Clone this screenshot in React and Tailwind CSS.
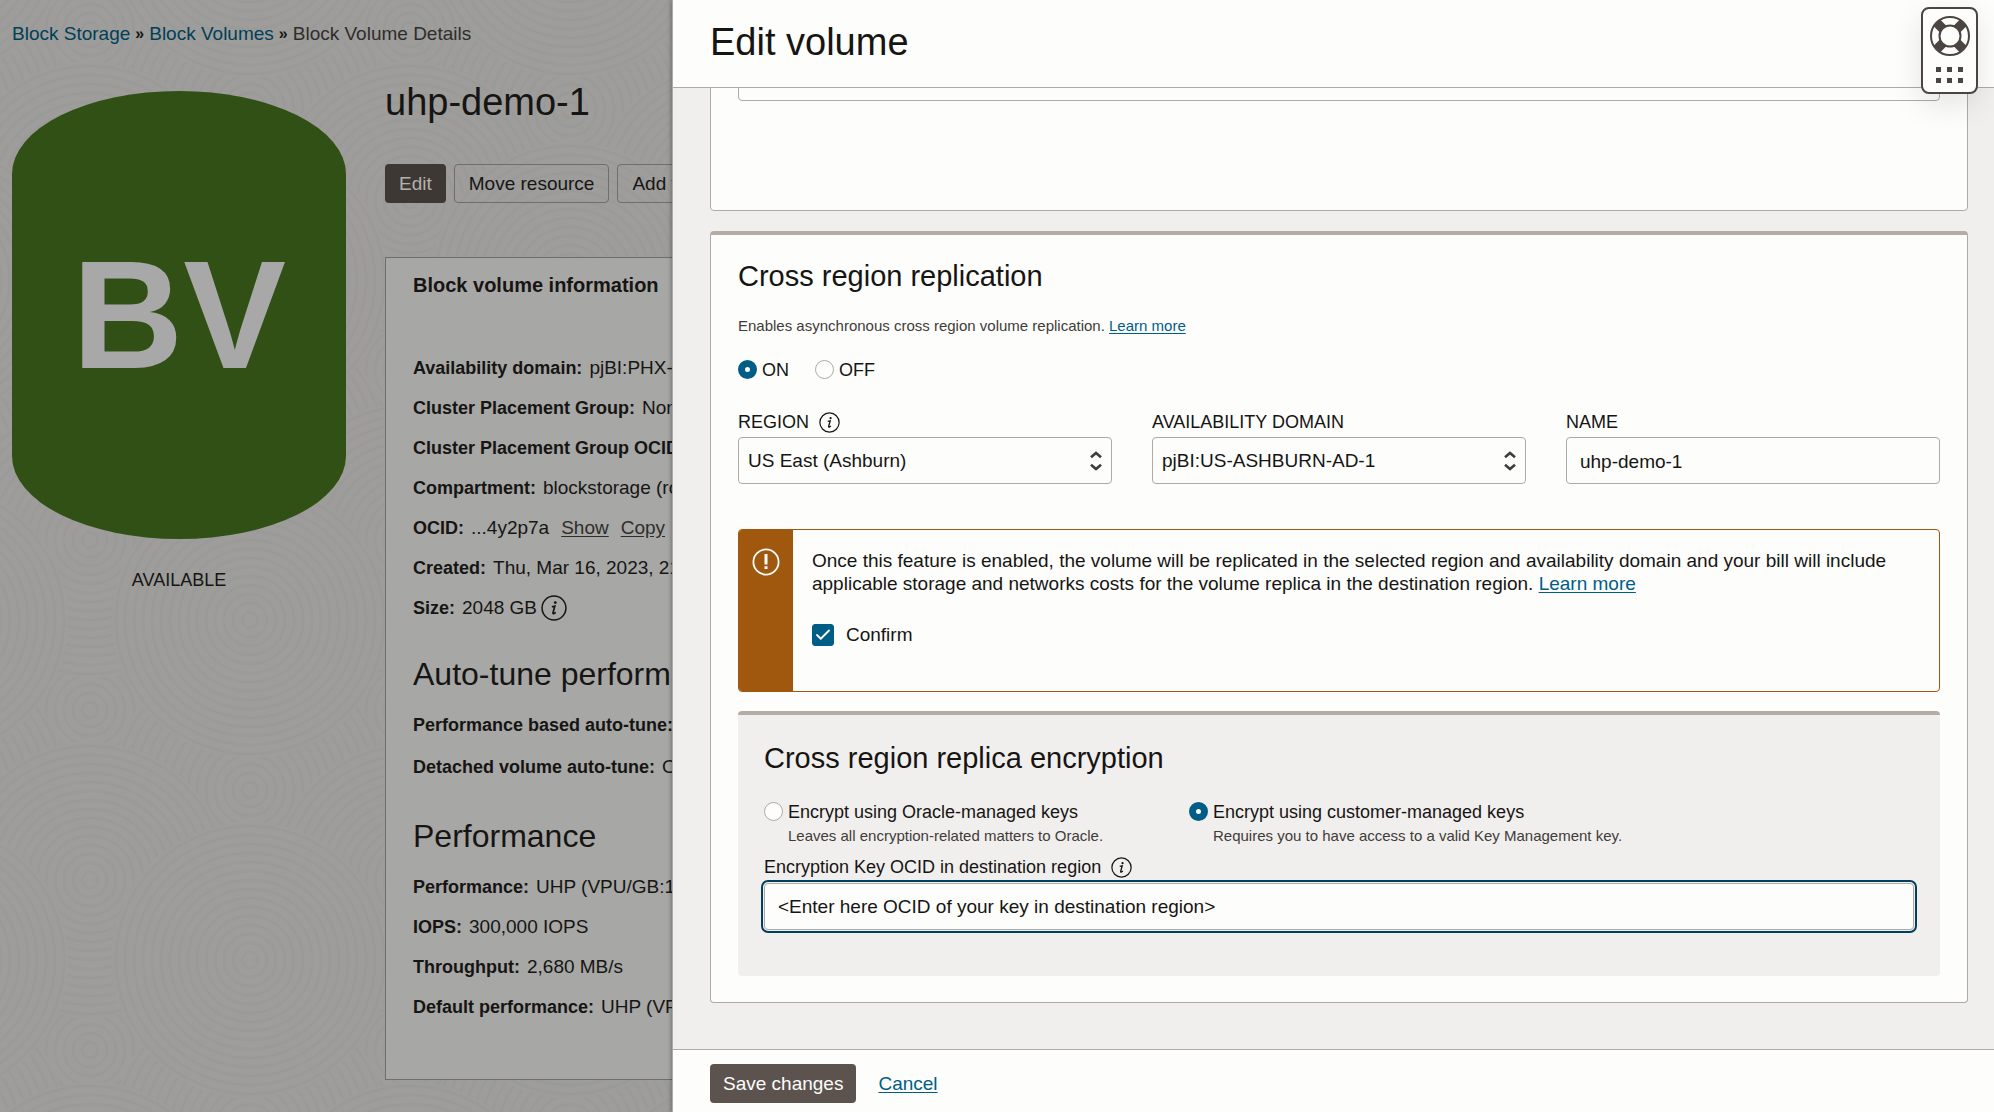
import React, { useState } from 'react';
import { Check } from 'lucide-react';

const volumeInfo = [
  { label: 'Availability domain:', value: 'pjBI:PHX-AD-1' },
  { label: 'Cluster Placement Group:', value: 'None' },
  { label: 'Cluster Placement Group OCID:', value: '-' },
  { label: 'Compartment:', value: 'blockstorage (root)' },
  { label: 'OCID:', value: '...4y2p7a', actions: ['Show', 'Copy'] },
  { label: 'Created:', value: 'Thu, Mar 16, 2023, 21:04:00 UTC' },
  { label: 'Size:', value: '2048 GB', info: true },
];

const autoTune = [
  { label: 'Performance based auto-tune:', value: 'Off' },
  { label: 'Detached volume auto-tune:', value: 'Off' },
];

const performance = [
  { label: 'Performance:', value: 'UHP (VPU/GB:120)' },
  { label: 'IOPS:', value: '300,000 IOPS' },
  { label: 'Throughput:', value: '2,680 MB/s' },
  { label: 'Default performance:', value: 'UHP (VPU/GB:120)' },
];

const rings = [8, 17, 26, 35, 44, 53, 62, 71, 80, 89, 98, 107, 116, 125, 134];

// Later groups cover the earlier ones, like overlapping scales
const swirls = [
  { x: 90, y: 30 }, { x: 250, y: 110 }, { x: 90, y: 200 }, { x: 250, y: 280 },
].flatMap(s => [-320, 0, 320].flatMap(dx => [-340, 0, 340].map(dy => ({ x: s.x + dx, y: s.y + dy }))));

const Backdrop = () => (
  <svg className="absolute inset-0 h-full w-full" aria-hidden="true">
    <defs>
      <pattern id="swirl" width="320" height="340" patternUnits="userSpaceOnUse">
        <rect width="320" height="340" fill="#9d9c9a" />
        {swirls.map((s, i) => (
          <g key={i} fill="none" stroke="#9a9b98" strokeWidth="3">
            <circle cx={s.x} cy={s.y} r="138" fill="#9e9d9b" stroke="none" />
            {rings.map(r => <circle key={r} cx={s.x} cy={s.y} r={r} />)}
          </g>
        ))}
      </pattern>
    </defs>
    <rect width="100%" height="100%" fill="url(#swirl)" />
  </svg>
);

const InfoIcon = ({ className }) => (
  <svg viewBox="0 0 24 24" className={className} fill="none" stroke="currentColor" aria-hidden="true">
    <circle cx="12" cy="12" r="11" strokeWidth="1.4" />
    <circle cx="13.2" cy="7" r="1.3" fill="currentColor" stroke="none" />
    <path d="M10 10.8l2.8-.6-1.8 6.4c-.2.8.5.9 1.1.5l1.5-1.1" strokeWidth="1.5" />
  </svg>
);

const LifebuoyIcon = () => (
  <svg viewBox="0 0 40 40" className="size-10" fill="none" stroke="#4a4541" aria-hidden="true">
    <path d="M7 7l7 7M33 7l-7 7M7 33l7-7M33 33l-7-7" strokeWidth="9.5" />
    <circle cx="20" cy="20" r="19" strokeWidth="2" />
    <circle cx="20" cy="20" r="10.5" strokeWidth="2" fill="#fdfdfc" />
  </svg>
);

const Details = ({ rows, className }) => (
  <dl className={className}>
    {rows.map(row => (
      <div key={row.label} className="flex h-[22px] items-center whitespace-nowrap leading-[22px]">
        <dt className="mr-[7px] text-lg leading-[22px] font-bold">{row.label}</dt>
        <dd className="flex items-center">
          {row.value}
          {row.actions && row.actions.map(action => (
            <a key={action} href="#" className="ml-3 text-[#2f2d2b] underline underline-offset-2">{action}</a>
          ))}
          {row.info && <InfoIcon className="ml-1 size-[26px]" />}
        </dd>
      </div>
    ))}
  </dl>
);

const Radio = ({ id, name, label, hint, checked, onChange }) => (
  <div className="flex items-start gap-[5px]">
    <input
      type="radio"
      id={id}
      name={name}
      checked={checked}
      onChange={onChange}
      className="mt-px size-[19px] shrink-0 appearance-none rounded-full border border-[#aeaaa6] bg-[#fdfdfc] checked:border-[7px] checked:border-[#005d86]"
    />
    <div>
      <label htmlFor={id} className="block text-lg leading-[23px]">{label}</label>
      {hint && <p className="text-[15px] leading-6 text-[#3f3c39]">{hint}</p>}
    </div>
  </div>
);

const SelectField = ({ id, label, options, info }) => (
  <div className="min-w-0 flex-1">
    <div className="flex h-[26px] items-center gap-2.5">
      <label htmlFor={id} className="text-lg">{label}</label>
      {info && <InfoIcon className="size-[21px]" />}
    </div>
    <div className="relative mt-0.5">
      <select id={id} className="h-[47px] w-full appearance-none rounded border border-[#aeaaa6] bg-[#fdfdfc] pt-0.5 pr-10 pl-[9px]">
        {options.map(o => <option key={o}>{o}</option>)}
      </select>
      <svg viewBox="0 0 12 20" className="pointer-events-none absolute top-3.5 right-2.5 h-5 w-3" fill="none" stroke="#3f3c39" strokeWidth="2.6" aria-hidden="true">
        <path d="M1 6.3L6 2l5 4.3M1 13.7L6 18l5-4.3" />
      </svg>
    </div>
  </div>
);

const VolumePage = () => (
  <main className="relative min-w-0 flex-1 overflow-hidden text-[#161513]">
    <Backdrop />
    <div className="relative px-3 pt-[22px]">
      <nav className="flex gap-[5px] whitespace-nowrap leading-6" aria-label="Breadcrumb">
        <a href="#" className="text-[#003f58]">Block Storage</a>
        <span className="text-base leading-6 font-bold">»</span>
        <a href="#" className="text-[#003f58]">Block Volumes</a>
        <span className="text-base leading-6 font-bold">»</span>
        <span className="text-[#2f2d2b]">Block Volume Details</span>
      </nav>

      <div className="mt-8 flex gap-[39px]">
        <div className="w-[334px] shrink-0 pt-[13px] text-center">
          <div className="flex h-[448px] items-center justify-center rounded-[50%/18.5%] bg-[#315015] text-[154px] leading-none font-bold text-[#a8a8a8]">
            BV
          </div>
          <p className="mt-[29px] text-lg leading-6">AVAILABLE</p>
        </div>

        <div className="w-[1200px] shrink-0">
          <h1 className="text-[38px] leading-[48px]">uhp-demo-1</h1>
          <div className="mt-[38px] flex gap-2">
            <button type="button" className="h-[39px] rounded bg-[#3e3835] px-3.5 pt-0.5 text-[#b3b1af]">Edit</button>
            <button type="button" className="h-[39px] rounded border border-[#706e6c] px-3.5 pt-0.5">Move resource</button>
            <button type="button" className="h-[39px] rounded border border-[#706e6c] px-3.5 pt-0.5">Add tags</button>
          </div>

          <section className="mt-[54px] border border-[#706e6c] bg-[#a7a7a5] px-[27px] pt-[13px] pb-[61px]">
            <h2 className="text-[20px] leading-7 font-bold">Block volume information</h2>
            <Details rows={volumeInfo} className="mt-[58px] flex flex-col gap-[18px]" />
            <h2 className="mt-[35px] text-[32px] leading-10">Auto-tune performance</h2>
            <Details rows={autoTune} className="mt-5 flex flex-col gap-5" />
            <h2 className="mt-[38px] text-[32px] leading-10">Performance</h2>
            <Details rows={performance} className="mt-5 flex flex-col gap-[18px]" />
          </section>
        </div>
      </div>
    </div>
  </main>
);

const EditVolumeDrawer = () => {
  const [replication, setReplication] = useState('on');
  const [keyType, setKeyType] = useState('customer');
  const [confirmed, setConfirmed] = useState(true);
  const [volumeName, setVolumeName] = useState('uhp-demo-1');
  const [keyOcid, setKeyOcid] = useState('<Enter here OCID of your key in destination region>');

  return (
    <aside className="relative flex w-[66.3%] shrink-0 flex-col border-l border-[#aeaaa6] bg-[#fdfdfc] shadow-[-1px_0_4px_rgba(0,0,0,0.3)]">
      <header className="border-b border-[#aeaaa6] px-[37px] pt-[18px] pb-[21px]">
        <h1 className="text-[38px] leading-[48px]">Edit volume</h1>
      </header>

      {/* Form body, scrolled to its end */}
      <div className="flex min-h-0 flex-1 flex-col justify-end gap-5 overflow-hidden bg-[#f1efee] pr-[26px] pb-[46px] pl-[37px]">
        <section className="shrink-0 rounded border border-[#aeaaa6] bg-[#fdfdfc] px-[27px] pb-[109px]">
          <select aria-label="Backup policy" className="h-[47px] w-full appearance-none rounded border border-[#aeaaa6] bg-[#fdfdfc] px-[9px]">
            <option>No backup policy</option>
          </select>
        </section>

        <section className="shrink-0 rounded border border-t-4 border-[#aeaaa6] border-t-[#b5aca6] bg-[#fdfdfc] px-[27px] pt-[23px] pb-[26px]">
          <h2 className="text-[29px] leading-9">Cross region replication</h2>
          <p className="mt-5 text-[15px] leading-6 text-[#3f3c39]">
            Enables asynchronous cross region volume replication.{' '}
            <a href="#" className="text-[#005d86] underline underline-offset-2">Learn more</a>
          </p>

          <div className="mt-[21px] flex gap-[26px]">
            <Radio id="rep-on" name="replication" label="ON" checked={replication === 'on'} onChange={() => setReplication('on')} />
            <Radio id="rep-off" name="replication" label="OFF" checked={replication === 'off'} onChange={() => setReplication('off')} />
          </div>

          <div className="mt-[27px] flex gap-10">
            <SelectField id="region" label="REGION" options={['US East (Ashburn)']} info />
            <SelectField id="domain" label="AVAILABILITY DOMAIN" options={['pjBI:US-ASHBURN-AD-1']} />
            <div className="min-w-0 flex-1">
              <label htmlFor="name" className="flex h-[26px] items-center text-lg">NAME</label>
              <input
                id="name"
                type="text"
                value={volumeName}
                onChange={(e) => setVolumeName(e.target.value)}
                className="mt-0.5 h-[47px] w-full rounded border border-[#aeaaa6] bg-[#fdfdfc] px-[13px] pt-0.5"
              />
            </div>
          </div>

          {/* Billing warning */}
          <div className="mt-[45px] flex overflow-hidden rounded border border-[#a0570e]">
            <div className="flex w-[54px] shrink-0 justify-center bg-[#a0570e] pt-[18px]">
              <svg viewBox="0 0 28 28" className="size-7" fill="none" stroke="#fdfdfc" aria-hidden="true">
                <circle cx="14" cy="14" r="12.6" strokeWidth="1.8" />
                <path d="M14 6v10.5M14 18.3v2.7" strokeWidth="3" />
              </svg>
            </div>
            <div className="min-w-0 pt-[19px] pr-6 pb-11 pl-[19px]">
              <p className="leading-[23px]">
                Once this feature is enabled, the volume will be replicated in the selected region and availability domain and your bill will include
                applicable storage and networks costs for the volume replica in the destination region.{' '}
                <a href="#" className="text-[#005d86] underline underline-offset-2">Learn more</a>
              </p>
              <div className="mt-7 flex items-center gap-3">
                <div className="relative size-[22px]">
                  <input
                    id="confirm"
                    type="checkbox"
                    checked={confirmed}
                    onChange={(e) => setConfirmed(e.target.checked)}
                    className="block size-[22px] appearance-none rounded-[3px] border border-[#aeaaa6] checked:border-[#005d86] checked:bg-[#005d86]"
                  />
                  {confirmed && <Check className="pointer-events-none absolute inset-0.5 size-[18px] text-white" strokeWidth={2.4} />}
                </div>
                <label htmlFor="confirm" className="leading-6">Confirm</label>
              </div>
            </div>
          </div>

          {/* Encryption */}
          <section className="mt-[19px] rounded border-t-4 border-[#b5aca6] bg-[#f1efee] px-[26px] pt-[25px] pb-[46px]">
            <h3 className="text-[29px] leading-9">Cross region replica encryption</h3>
            <div className="mt-[25px] grid grid-cols-[425px_1fr]">
              <Radio
                id="oracle-keys"
                name="keys"
                label="Encrypt using Oracle-managed keys"
                hint="Leaves all encryption-related matters to Oracle."
                checked={keyType === 'oracle'}
                onChange={() => setKeyType('oracle')}
              />
              <Radio
                id="customer-keys"
                name="keys"
                label="Encrypt using customer-managed keys"
                hint="Requires you to have access to a valid Key Management key."
                checked={keyType === 'customer'}
                onChange={() => setKeyType('customer')}
              />
            </div>
            <div className="mt-1.5 flex h-[26px] items-center gap-2.5">
              <label htmlFor="key-ocid" className="text-lg">Encryption Key OCID in destination region</label>
              <InfoIcon className="size-[21px]" />
            </div>
            <input
              id="key-ocid"
              type="text"
              value={keyOcid}
              onChange={(e) => setKeyOcid(e.target.value)}
              className="mt-[3px] h-[47px] w-full rounded border border-[#aeaaa6] bg-[#fdfdfc] px-[13px] outline-2 outline-offset-1 outline-[#00405a]"
            />
          </section>
        </section>
      </div>

      <footer className="flex items-center gap-[22px] border-t border-[#aeaaa6] px-[37px] pt-3.5 pb-[9px]">
        <button type="button" className="h-[39px] rounded bg-[#5c534e] px-[13px] pt-0.5 text-[#fdfdfc]">Save changes</button>
        <a href="#" className="pt-0.5 text-[#005d86] underline underline-offset-2">Cancel</a>
      </footer>

      {/* Floating help launcher */}
      <button
        type="button"
        aria-label="Help"
        className="absolute top-[7px] right-4 flex w-[57px] flex-col items-center rounded-lg border-2 border-[#4a4541] bg-[#fdfdfc] pt-[7px] pb-[9px] shadow-[0_10px_30px_rgba(0,0,0,0.1)]"
      >
        <LifebuoyIcon />
        <span className="mt-[11px] grid grid-cols-3 gap-[6px]">
          {[0, 1, 2, 3, 4, 5].map(i => <span key={i} className="size-[5px] bg-[#4a4541]" />)}
        </span>
      </button>
    </aside>
  );
};

const App = () => {
  return (
    <div className="flex h-screen overflow-hidden font-['Liberation_Sans',Arial,sans-serif] text-[19px] text-[#161513]">
      <VolumePage />
      <EditVolumeDrawer />
    </div>
  );
};

export default App;
